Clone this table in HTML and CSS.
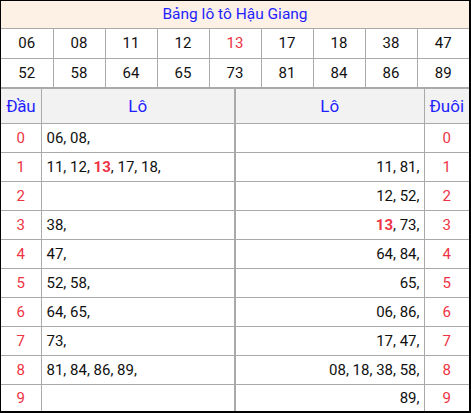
FILE: index.html
```html
<!DOCTYPE html>
<html>
<head>
<meta charset="utf-8">
<link rel="stylesheet" href="styles.css">
</head>
<body>
<div class="box">
  <div class="title">Bảng lô tô Hậu Giang</div>
  <table class="nums">
    <tr><td>06</td><td>08</td><td>11</td><td>12</td><td class="red">13</td><td>17</td><td>18</td><td>38</td><td>47</td></tr>
    <tr><td>52</td><td>58</td><td>64</td><td>65</td><td>73</td><td>81</td><td>84</td><td>86</td><td>89</td></tr>
  </table>
  <table class="lo">
    <colgroup><col class="c-dau"><col class="c-left"><col class="c-right"><col class="c-duoi"></colgroup>
    <tr class="head"><th>Đầu</th><th class="mid">Lô</th><th>Lô</th><th>Đuôi</th></tr>
    <tr><td class="d">0</td><td class="l mid">06, 08,</td><td class="r"></td><td class="d">0</td></tr>
    <tr><td class="d">1</td><td class="l mid">11, 12, <b class="red">13</b>, 17, 18,</td><td class="r">11, 81,</td><td class="d">1</td></tr>
    <tr><td class="d">2</td><td class="l mid"></td><td class="r">12, 52,</td><td class="d">2</td></tr>
    <tr><td class="d">3</td><td class="l mid">38,</td><td class="r"><b class="red">13</b>, 73,</td><td class="d">3</td></tr>
    <tr><td class="d">4</td><td class="l mid">47,</td><td class="r">64, 84,</td><td class="d">4</td></tr>
    <tr><td class="d">5</td><td class="l mid">52, 58,</td><td class="r">65,</td><td class="d">5</td></tr>
    <tr><td class="d">6</td><td class="l mid">64, 65,</td><td class="r">06, 86,</td><td class="d">6</td></tr>
    <tr><td class="d">7</td><td class="l mid">73,</td><td class="r">17, 47,</td><td class="d">7</td></tr>
    <tr><td class="d">8</td><td class="l mid">81, 84, 86, 89,</td><td class="r">08, 18, 38, 58,</td><td class="d">8</td></tr>
    <tr class="last"><td class="d">9</td><td class="l mid"></td><td class="r">89,</td><td class="d">9</td></tr>
  </table>
</div>
</body>
</html>
```

FILE: styles.css
```css
* { box-sizing: border-box; }
html, body { margin: 0; padding: 0; background: #fff; }
body { font-family: Roboto, "Liberation Sans", Arial, sans-serif; color: #111; }
.box {
  width: 471px;
  height: 413px;
  border-style: solid;
  border-color: #000;
  border-width: 1px 2px 2px 1px;
  overflow: hidden;
}
.title {
  height: 28px;
  background: #fdf0e5;
  border-bottom: 1px solid #aaa;
  color: #1f1fff;
  font-size: 15.5px;
  text-align: center;
  line-height: 26px;
}
table { border-collapse: collapse; width: 100%; table-layout: fixed; }
.nums td {
  height: 30px;
  border: 1px solid #aaa;
  text-align: center;
  font-size: 15px;
  padding: 0;
}
.nums tr:first-child td { border-top: 0; height: 29px; }
.nums tr:last-child td { border-bottom: 2px solid #aaa; }
.nums td:first-child { border-left: 0; }
.nums td:last-child { border-right: 0; }
.red { color: #ee3344; }
b.red { font-weight: 700; }
.c-dau { width: 40px; }
.c-left { width: 194px; }
.c-right { width: 189px; }
.c-duoi { width: 45px; }
.lo th, .lo td { border: 1px solid #aaa; padding: 0; }
.lo tr > :first-child { border-left: 0; }
.lo tr > :last-child { border-right: 0; }
.lo .mid { border-right: 2px solid #aaa; }
.head th {
  height: 34px;
  background: #f2f2f2;
  color: #1f1fff;
  font-weight: 400;
  font-size: 17px;
  border-top: 0;
}
.head th:first-child { letter-spacing: -0.3px; }
.lo td { height: 29px; font-size: 15px; }
.lo tr.last td { border-bottom: 0; height: 27px; }
.lo td.d { text-align: center; color: #ee3344; font-size: 15px; }
.lo td.l { text-align: left; padding-left: 5px; }
.lo td.r { text-align: right; padding-right: 4px; }
```
